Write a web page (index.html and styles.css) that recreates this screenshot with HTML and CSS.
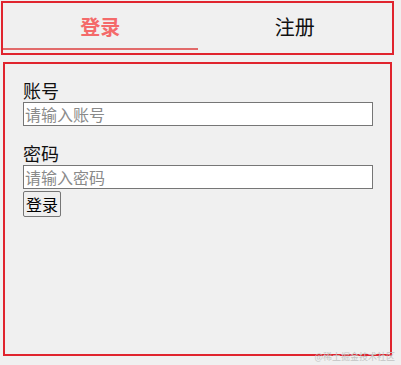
FILE: index.html
```html
<!DOCTYPE html>
<html>
<head>
  <meta charset="utf-8">
  <title>登录</title>
  <link rel="stylesheet" href="styles.css">
</head>
<body>
  <div class="tabs">
    <div class="tab active">登录</div>
    <div class="tab">注册</div>
  </div>

  <div class="panel">
    <form class="login-form">
      <label class="field-label" for="account">账号</label>
      <input class="field-input" id="account" type="text" placeholder="请输入账号">

      <label class="field-label second" for="password">密码</label>
      <input class="field-input" id="password" type="password" placeholder="请输入密码">

      <button class="submit-btn" type="button">登录</button>
    </form>
  </div>

  <div class="watermark">@稀土掘金技术社区</div>
</body>
</html>
```

FILE: styles.css
```css
html {
  height: 100%;
}
body {
  font-family: "Noto Sans CJK SC", "Noto Sans", sans-serif;
  background: #f0f0f0;
  margin: 0;
  padding: 1px 7px 0 1px;
  color: #111;
  position: relative;
  box-sizing: border-box;
  height: 100%;
  overflow: hidden;
}
.tabs {
  display: flex;
  border: 2px solid #e0242e;
  padding-bottom: 3px;
}
.tab {
  flex: 1;
  height: 45px;
  line-height: 48px;
  text-align: center;
  font-size: 20px;
  border-bottom: 2px solid transparent;
}
.tab.active {
  color: #f46a6a;
  font-weight: 700;
  border-bottom-color: #e26a6a;
}
.panel {
  box-sizing: border-box;
  margin: 7px 2px 0 2px;
  height: 294px;
  border: 2px solid #e0242e;
  padding: 14px 18px 0 18px;
}
.login-form {
  display: flex;
  flex-direction: column;
  align-items: flex-start;
}
.field-label {
  font-size: 18px;
  line-height: 24px;
}
.field-label.second {
  margin-top: 15px;
}
.field-input {
  box-sizing: border-box;
  width: 350px;
  height: 24px;
  margin: 0;
  padding: 0 1px;
  border: 1px solid #767676;
  background: #fff;
  font-family: inherit;
  font-size: 16px;
  line-height: 22px;
}
.field-input::placeholder {
  color: #8a8a8a;
}
.submit-btn {
  margin-top: 2px;
  height: 26px;
  padding: 0 2px;
  border: 1px solid #767676;
  border-radius: 2px;
  background: #efefef;
  font-family: inherit;
  font-size: 16px;
  line-height: 22px;
  color: #000;
}
.watermark {
  position: absolute;
  right: 6px;
  bottom: 2px;
  font-size: 9px;
  color: #c4c4c4;
}
```
